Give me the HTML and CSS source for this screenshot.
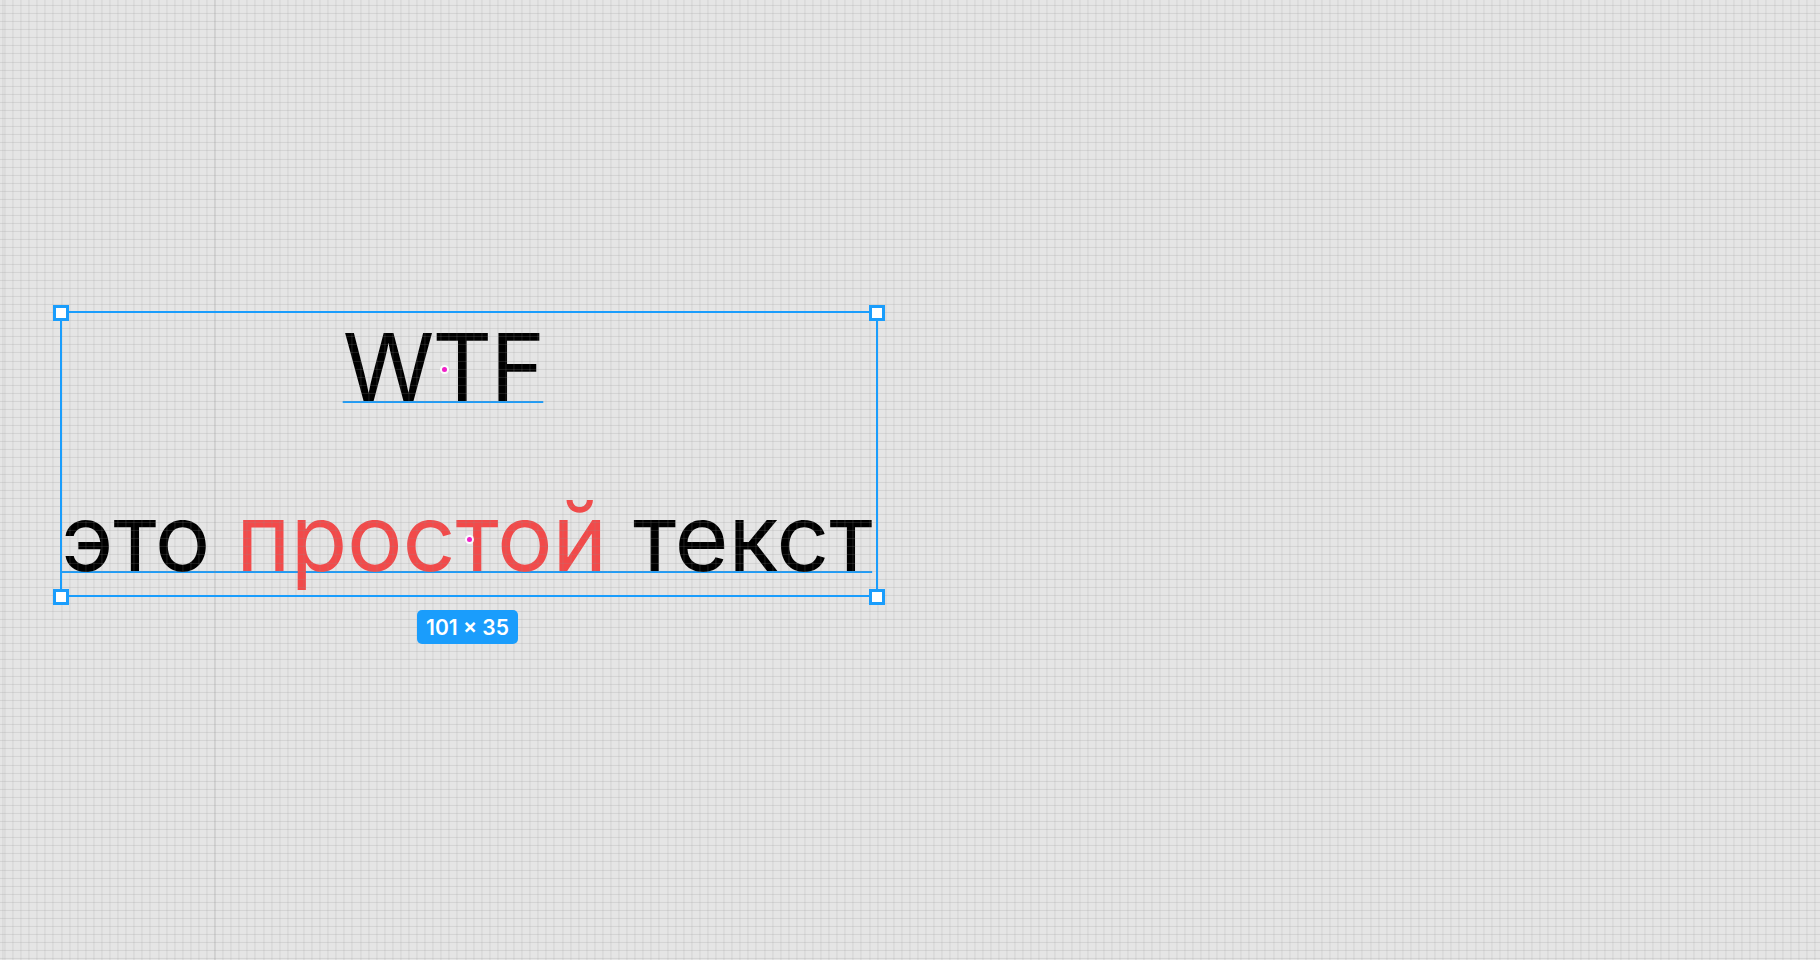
FILE: index.html
```html
<!DOCTYPE html>
<html lang="ru">
<head>
<meta charset="utf-8">
<title>Canvas</title>
<link rel="stylesheet" href="styles.css">
</head>
<body>
<div class="canvas">
  <div class="text-frame">
    <div class="line line-1"><span class="u">WTF</span></div>
    <div class="line line-2"><span class="u">это <span class="red">простой</span> текст</span></div>
  </div>
  <div class="grid"></div>
  <div class="major-line"></div>
  <div class="selection">
    <span class="handle h-tl"></span>
    <span class="handle h-tr"></span>
    <span class="handle h-bl"></span>
    <span class="handle h-br"></span>
  </div>
  <span class="dot dot-1"></span>
  <span class="dot dot-2"></span>
  <div class="badge">101 × 35</div>
</div>
</body>
</html>
```
FILE: styles.css
```css
html, body {
  margin: 0;
  padding: 0;
}
body {
  background: #e5e5e5;
  font-family: Inter, "Noto Sans", sans-serif;
}
.canvas {
  position: relative;
  width: 1820px;
  height: 960px;
  overflow: hidden;
  background: #e5e5e5;
}
.text-frame {
  position: absolute;
  left: 61px;
  top: 312px;
  width: 816px;
  height: 284px;
  display: flex;
  flex-direction: column;
  gap: 77px;
  padding-top: 9px;
  box-sizing: border-box;
}
.line {
  font-size: 93px;
  line-height: 93px;
  color: #000;
  white-space: nowrap;
  display: flex;
}
.line-1 {
  justify-content: center;
  padding-right: 52px;
  letter-spacing: -2px;
}
.line-2 {
  justify-content: flex-start;
  letter-spacing: -0.3px;
}
.u {
  text-decoration: underline;
  text-decoration-color: #1a9dfc;
  text-decoration-thickness: 2px;
  text-underline-offset: 0px;
  text-decoration-skip-ink: none;
}
.red {
  color: #f24a4a;
}
.grid {
  position: absolute;
  inset: 0;
  pointer-events: none;
  background-image:
    repeating-linear-gradient(to right, rgba(140, 140, 140, 0.2) 0 1px, transparent 1px 8.08px),
    repeating-linear-gradient(to bottom, rgba(140, 140, 140, 0.2) 0 1px, transparent 1px 8.08px);
  background-position: 4.44px 4.96px;
}
.major-line {
  position: absolute;
  left: 214px;
  top: 0;
  width: 2px;
  height: 960px;
  background: rgba(140, 140, 140, 0.12);
}
.selection {
  position: absolute;
  left: 60px;
  top: 311px;
  width: 818px;
  height: 286px;
  border: 2px solid #1a9dfc;
  box-sizing: border-box;
}
.handle {
  position: absolute;
  width: 16px;
  height: 16px;
  box-sizing: border-box;
  background: #fff;
  border: 3px solid #1a9dfc;
}
.h-tl { left: -9px; top: -8px; }
.h-tr { right: -9px; top: -8px; }
.h-bl { left: -9px; bottom: -10px; }
.h-br { right: -9px; bottom: -10px; }
.dot {
  position: absolute;
  width: 5px;
  height: 5px;
  border-radius: 50%;
  background: #f01fc8;
  box-shadow: 0 0 0 2px rgba(255, 255, 255, 0.9);
}
.dot-1 { left: 442px; top: 367px; }
.dot-2 { left: 467px; top: 537px; }
.badge {
  position: absolute;
  left: 417px;
  top: 610px;
  width: 101px;
  height: 34px;
  border-radius: 5px;
  background: #1a9dfc;
  color: #fff;
  font-family: Inter, "Noto Sans", sans-serif;
  font-size: 21px;
  font-weight: 600;
  display: flex;
  align-items: center;
  justify-content: center;
}
```
